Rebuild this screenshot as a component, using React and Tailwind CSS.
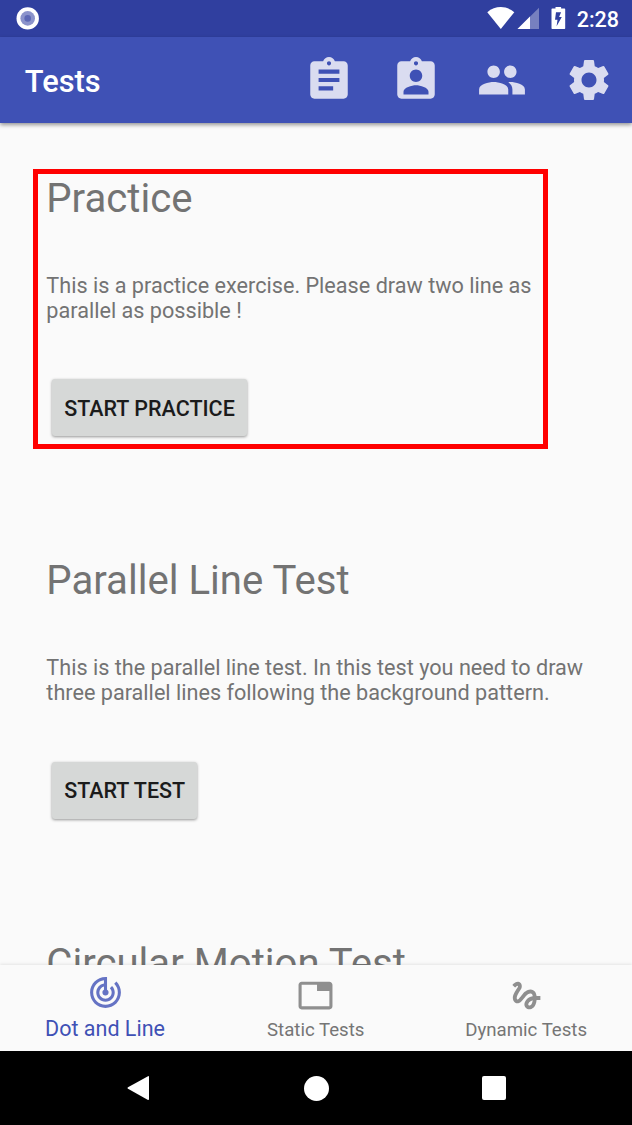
import React from "react";
import {
  MdAssignment,
  MdAssignmentInd,
  MdPeople,
  MdSettings,
  MdTrackChanges,
  MdTab,
  MdGesture,
} from "react-icons/md";

function StatusBar() {
  return (
    <div className="flex h-[37px] shrink-0 items-start justify-between bg-[#303f9f] pl-4 pr-[13px] pt-[7px]">
      <svg className="h-[23px] w-[23px]" viewBox="0 0 23 23">
        <circle cx="11.7" cy="11.4" r="11.2" fill="#fff" />
        <circle cx="11.7" cy="11.4" r="7.3" fill="#8b93cb" />
        <circle cx="11.7" cy="11.4" r="3.3" fill="#5d68b5" />
      </svg>
      <div className="flex items-start">
        <svg className="h-[22px] w-[79px]" viewBox="0 0 79 22">
          <path d="M.3 5.200C8.300-1.600 19.300-1.600 27.300 5.200L13.800 22Z" fill="#fff" />
          <path d="M52 .8V22H30.500Z" fill="#7780bf" />
          <path d="M43 9.600V22H30.500Z" fill="#fff" />
          <path
            fillRule="evenodd"
            d="M68.500 0h5.600v1.500h3.400a.7.7 0 0 1 .7.7V21.300a.7.7 0 0 1-.7.7H65.200a.7.7 0 0 1-.7-.7V2.200a.7.7 0 0 1 .7-.7h3.300ZM69 5.300L68 12.700h2.500l-.9 6.500 5.200-9.200h-2.700l2-4.700Z"
            fill="#fff"
          />
        </svg>
        <span className="ml-[11px] text-[21.5px] font-medium leading-[25px] text-white">2:28</span>
      </div>
    </div>
  );
}

const actions = [
  { name: "results", Icon: MdAssignment },
  { name: "profile", Icon: MdAssignmentInd },
  { name: "people", Icon: MdPeople },
  { name: "settings", Icon: MdSettings },
];

function AppBar() {
  return (
    <header className="z-10 flex h-[86px] shrink-0 items-center justify-between bg-[#3f51b5] pl-[24.8px] pr-[18.3px] shadow-[0_2px_4px_rgba(0,0,0,0.4)]">
      <h1 className="pt-[3px] text-[30.8px] font-medium leading-9 text-white">Tests</h1>
      <div className="flex gap-[36.5px] text-[#dadcf0]">
        {actions.map(({ name, Icon }) => (
          <button key={name} aria-label={name}>
            <Icon className="h-[50px] w-[50px]" />
          </button>
        ))}
      </div>
    </header>
  );
}

function TestSection({ title, lines, action, highlighted }) {
  return (
    <section className="relative h-[382.4px] shrink-0 pl-[46.3px] text-[#737373]">
      <h2 className="text-[40.15px] leading-[47px]">{title}</h2>
      <p className="mt-[50.8px] whitespace-nowrap text-[21.65px] leading-[25px]">
        {lines.map((line) => (
          <span key={line} className="block">{line}</span>
        ))}
      </p>
      {action && (
        <button className="ml-[5.7px] mt-[56.5px] flex h-[57px] items-center rounded-[3px] bg-[#d6d8d7] px-[12.2px] pt-[2px] text-[21.5px] font-medium text-[#1b1b1b] shadow-[0_1px_3px_rgba(0,0,0,0.4)]">
          {action}
        </button>
      )}
      {highlighted && (
        <div className="pointer-events-none absolute left-[33px] top-[-6px] h-[280px] w-[515px] border-[5px] border-[#ff0000]" />
      )}
    </section>
  );
}

function BottomTabs() {
  return (
    <nav className="z-10 grid h-[86px] shrink-0 grid-cols-3 bg-[#fafafa] text-[18.65px] leading-[22px] text-[#757575] shadow-[0_-1px_3px_rgba(0,0,0,0.09)]">
      <div className="flex flex-col items-center pr-[0.6px] pt-[9px] text-[21.5px] text-[#3f51b5]">
        <MdTrackChanges className="h-[37px] w-[37px] text-[#6573c4]" />
        <span className="mt-[6.5px]">Dot and Line</span>
      </div>
      <div className="flex flex-col items-center pr-[0.6px] pt-[12px]">
        <MdTab className="h-[37px] w-[37px] text-[#8f8f8f]" />
        <span className="mt-[4.5px]">Static Tests</span>
      </div>
      <div className="flex flex-col items-center pr-[1px] pt-[12px]">
        <MdGesture className="h-[37px] w-[37px] text-[#8f8f8f]" />
        <span className="mt-[4.5px]">Dynamic Tests</span>
      </div>
    </nav>
  );
}

function SystemNav() {
  return (
    <div className="flex h-[74px] shrink-0 items-center justify-between bg-black px-[126px]">
      <svg className="h-[26px] w-[25px]" viewBox="0 0 25 26">
        <path d="M22 1.200L2 12.200Q.8 13 2 13.800L22 25Q23 25.300 23 24V2Q23 .8 22 1.200Z" fill="#fff" />
      </svg>
      <div className="h-[25px] w-[25px] rounded-full bg-white" />
      <div className="h-6 w-6 rounded-[2px] bg-white" />
    </div>
  );
}

export default function App() {
  return (
    <div className="flex h-[1125px] w-[632px] flex-col overflow-hidden bg-[#fafafa] font-['Roboto',sans-serif]">
      <StatusBar />
      <AppBar />
      <main className="flex min-h-0 flex-1 flex-col overflow-hidden pt-[52px]">
        <TestSection
          title="Practice"
          lines={["This is a practice exercise. Please draw two line as", "parallel as possible !"]}
          action="START PRACTICE"
          highlighted
        />
        <TestSection
          title="Parallel Line Test"
          lines={["This is the parallel line test. In this test you need to draw", "three parallel lines following the background pattern."]}
          action="START TEST"
        />
        <TestSection title="Circular Motion Test" lines={[]} />
      </main>
      <BottomTabs />
      <SystemNav />
    </div>
  );
}
